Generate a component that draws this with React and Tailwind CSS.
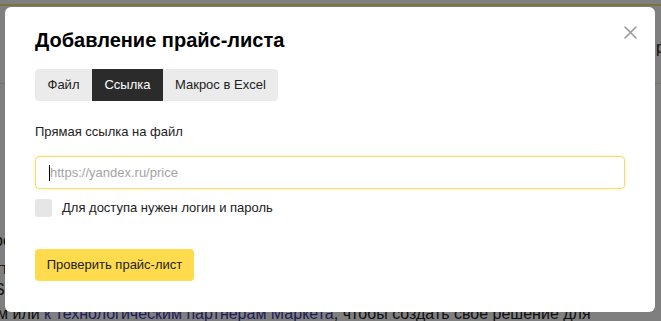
import React from "react";

const font = { fontFamily: '"Liberation Sans", Arial, sans-serif' };

function CloseIcon() {
  return (
    <svg width="13" height="13" viewBox="0 0 13 13" fill="none">
      <path d="M1 1L12 12M12 1L1 12" stroke="#9a9a9a" strokeWidth="1.6" strokeLinecap="round" />
    </svg>
  );
}

export default function App() {
  return (
    <div className="relative w-[661px] h-[321px] overflow-hidden bg-white text-[#222]" style={font}>
      {/* page behind the dialog */}
      <div className="flex flex-col">
        <div className="h-[4px]" />
        <div className="h-[2px] bg-[#ffe37a]" />
        <div className="h-[77px] flex justify-end pt-[33px]">
          <span className="text-[16px] leading-[18px] -mr-[4px]">р</span>
        </div>
        <div className="h-px bg-[#f3e6b3]" />
        <div className="flex flex-col text-[16px] leading-[20px] -ml-[6px]">
          <div className="h-[147px]" />
          <div>оо</div>
          <div className="h-[8px]" />
          <div>тт</div>
          <div className="h-[1px]" />
          <div>SS</div>
          <div className="h-[4px]" />
          <div className="whitespace-nowrap ml-[3px]">
            м или <span className="text-[#3b3bb0]">к технологическим партнерам Маркета</span>, чтобы создать свое решение для
          </div>
        </div>
      </div>

      {/* overlay */}
      <div className="absolute inset-0 bg-black/50" />

      {/* dialog */}
      <div className="absolute left-[5px] top-[7px] w-[650px] h-[305px] bg-white rounded-[6px] pl-[30px] pr-[30px] pt-[21px] flex flex-col items-start">
        <button className="absolute right-[13px] top-[13px] w-[24px] h-[24px] flex items-center justify-center">
          <CloseIcon />
        </button>

        <h2 className="text-[20px] leading-[24px] font-bold text-[#000]">Добавление прайс-листа</h2>

        <div className="mt-[17px] flex h-[32px] rounded-[4px] bg-[#ebebeb] text-[13px] leading-[32px] overflow-hidden">
          <div className="px-[12.5px] text-[#222]">Файл</div>
          <div className="px-[12.5px] bg-[#2b2b2b] text-white">Ссылка</div>
          <div className="px-[12px] text-[#222]">Макрос в Excel</div>
        </div>

        <div className="mt-[23px] text-[13px] leading-[16px] text-[#222]">Прямая ссылка на файл</div>

        <div className="mt-[16px] w-[590px] h-[33px] rounded-[4px] border border-[#f6d96a] shadow-[0_0_0_2px_rgba(255,221,96,0.12)] flex items-center pl-[13px] text-[13px]">
          <span className="w-px h-[16px] bg-black" />
          <span className="text-[#a3a3a3]">https://yandex.ru/price</span>
        </div>

        <label className="mt-[10px] flex items-center gap-[10px] text-[13px] leading-[18px] text-[#222]">
          <span className="w-[17px] h-[18px] rounded-[3px] bg-[#e6e6e6]" />
          <span>Для доступа нужен логин и пароль</span>
        </label>

        <button className="mt-[32px] h-[32px] w-[159px] rounded-[4px] bg-[#ffdb4d] text-[13px] text-[#222]">
          Проверить прайс-лист
        </button>
      </div>
    </div>
  );
}
